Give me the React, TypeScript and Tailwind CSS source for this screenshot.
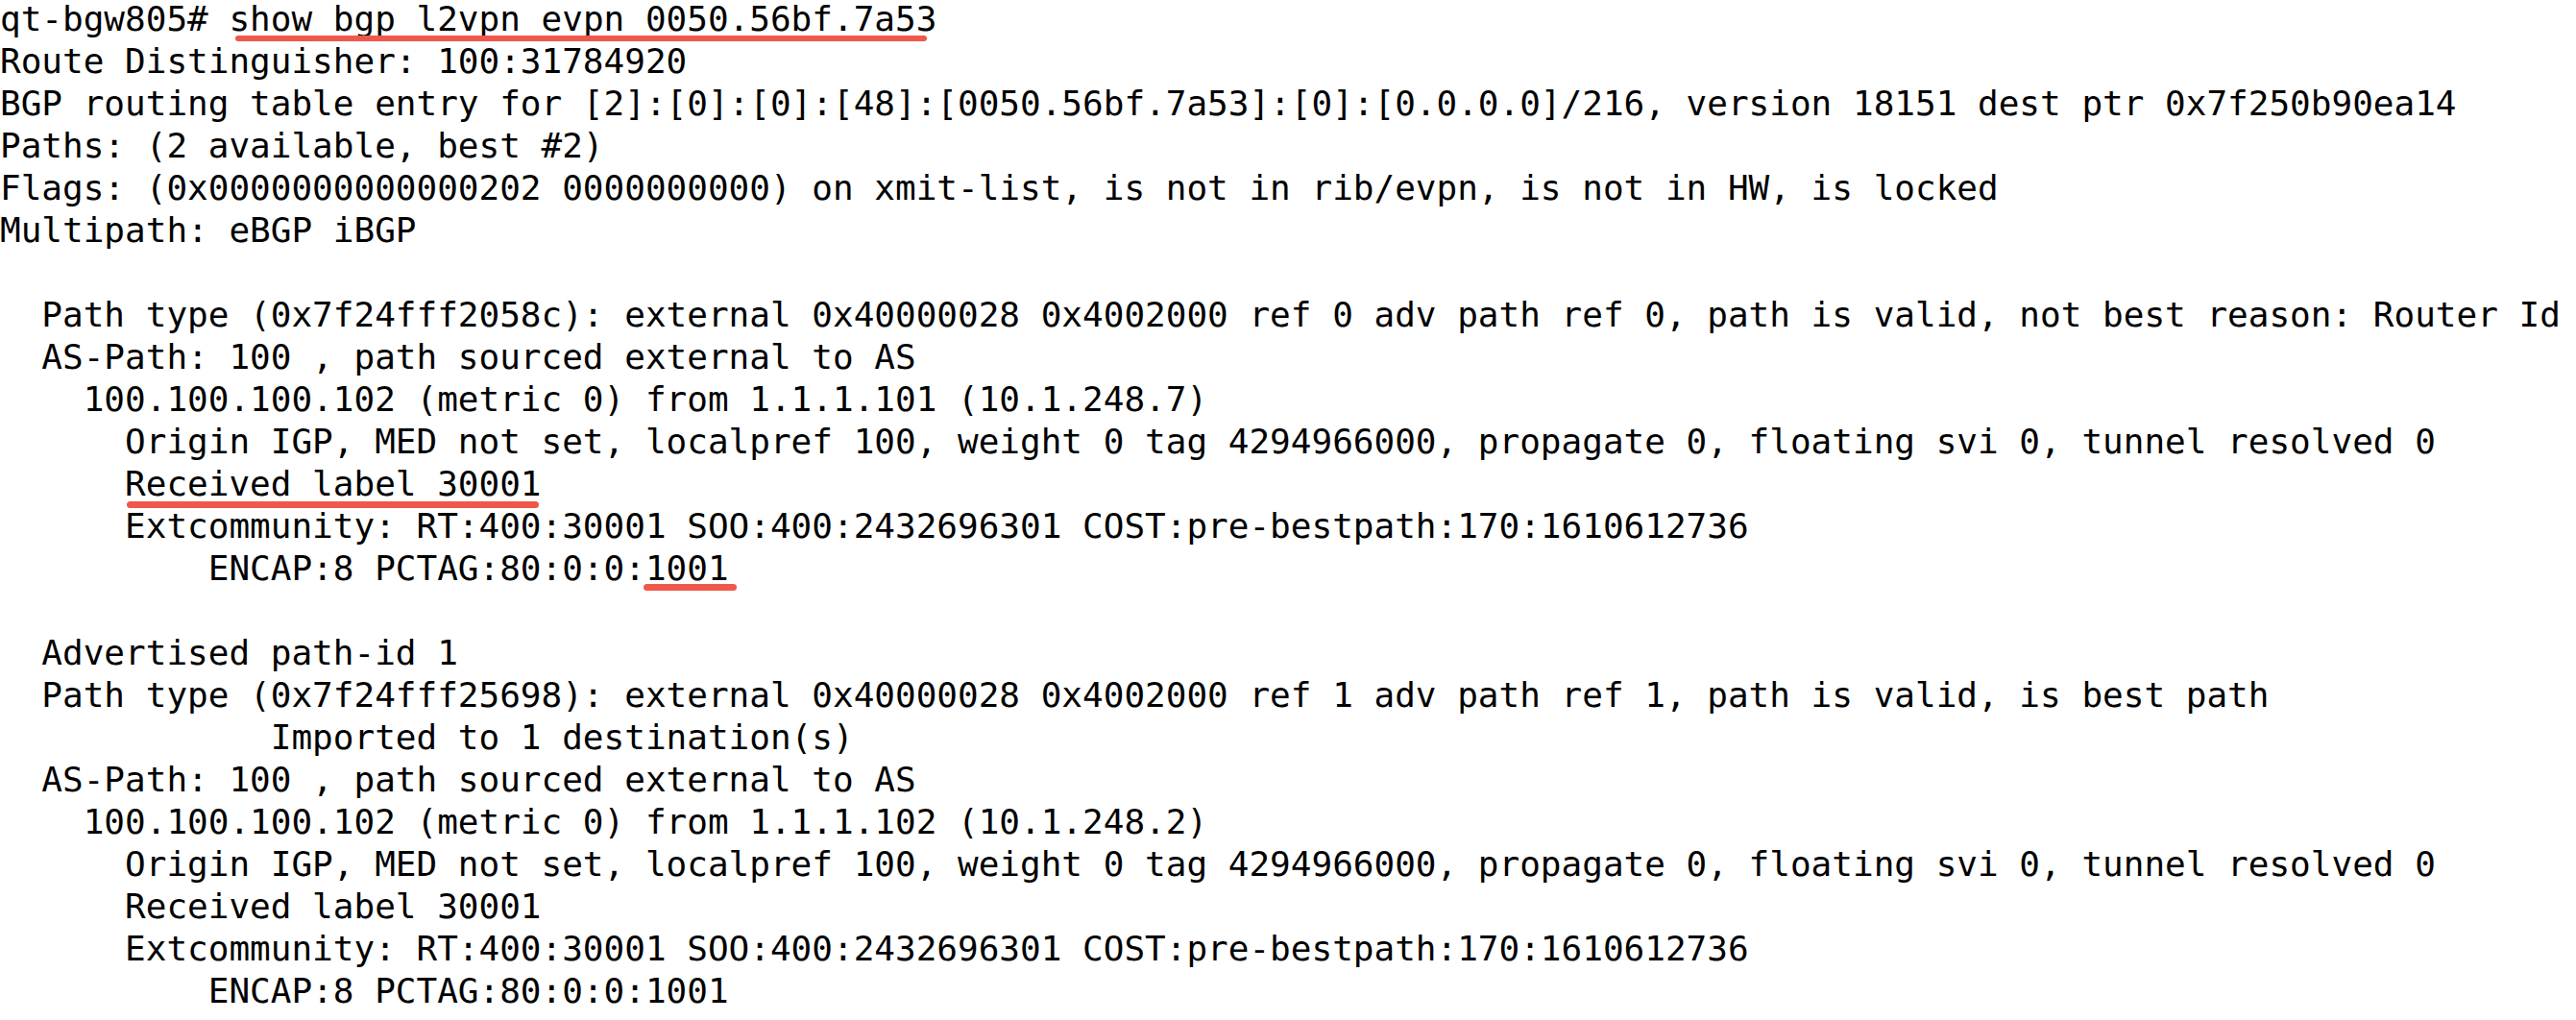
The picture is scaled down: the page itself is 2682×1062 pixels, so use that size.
import React from 'react';

// red marker drawn under a piece of terminal text
const Mark: React.FC<{ children: React.ReactNode; bar: string }> = ({ children, bar }) => (
    <span className="relative inline-block">
        {children}
        <span className={`absolute rounded-full bg-[#f0574b] ${bar}`} />
    </span>
);

const Line: React.FC<{ children?: React.ReactNode }> = ({ children }) => (
    <div className="h-[44px] whitespace-pre">{children ?? ' '}</div>
);

const App: React.FC = () => {
    return (
        <div className="min-h-screen w-full overflow-hidden bg-white text-black">
            <div className="-mt-[2px] font-['DejaVu_Sans_Mono','Liberation_Mono',monospace] text-[36px] leading-[44px]">
                <Line>
                    qt-bgw805# <Mark bar="left-[7px] right-[10px] top-[39px] h-[6px]">show bgp l2vpn evpn 0050.56bf.7a53</Mark>
                </Line>
                <Line>Route Distinguisher: 100:31784920</Line>
                <Line>BGP routing table entry for [2]:[0]:[0]:[48]:[0050.56bf.7a53]:[0]:[0.0.0.0]/216, version 18151 dest ptr 0x7f250b90ea14</Line>
                <Line>Paths: (2 available, best #2)</Line>
                <Line>Flags: (0x0000000000000202 0000000000) on xmit-list, is not in rib/evpn, is not in HW, is locked</Line>
                <Line>Multipath: eBGP iBGP</Line>
                <Line />
                <Line>  Path type (0x7f24fff2058c): external 0x40000028 0x4002000 ref 0 adv path ref 0, path is valid, not best reason: Router Id</Line>
                <Line>  AS-Path: 100 , path sourced external to AS</Line>
                <Line>    100.100.100.102 (metric 0) from 1.1.1.101 (10.1.248.7)</Line>
                <Line>      Origin IGP, MED not set, localpref 100, weight 0 tag 4294966000, propagate 0, floating svi 0, tunnel resolved 0</Line>
                <Line>
                    {'      '}<Mark bar="left-[2px] right-[3px] top-[40px] h-[7px]">Received label 30001</Mark>
                </Line>
                <Line>      Extcommunity: RT:400:30001 SOO:400:2432696301 COST:pre-bestpath:170:1610612736</Line>
                <Line>
                    {'          ENCAP:8 PCTAG:80:0:0:'}<Mark bar="-left-[2px] -right-[8px] top-[38px] h-[7px]">1001</Mark>
                </Line>
                <Line />
                <Line>  Advertised path-id 1</Line>
                <Line>  Path type (0x7f24fff25698): external 0x40000028 0x4002000 ref 1 adv path ref 1, path is valid, is best path</Line>
                <Line>             Imported to 1 destination(s)</Line>
                <Line>  AS-Path: 100 , path sourced external to AS</Line>
                <Line>    100.100.100.102 (metric 0) from 1.1.1.102 (10.1.248.2)</Line>
                <Line>      Origin IGP, MED not set, localpref 100, weight 0 tag 4294966000, propagate 0, floating svi 0, tunnel resolved 0</Line>
                <Line>      Received label 30001</Line>
                <Line>      Extcommunity: RT:400:30001 SOO:400:2432696301 COST:pre-bestpath:170:1610612736</Line>
                <Line>          ENCAP:8 PCTAG:80:0:0:1001</Line>
            </div>
        </div>
    );
};

export default App;
